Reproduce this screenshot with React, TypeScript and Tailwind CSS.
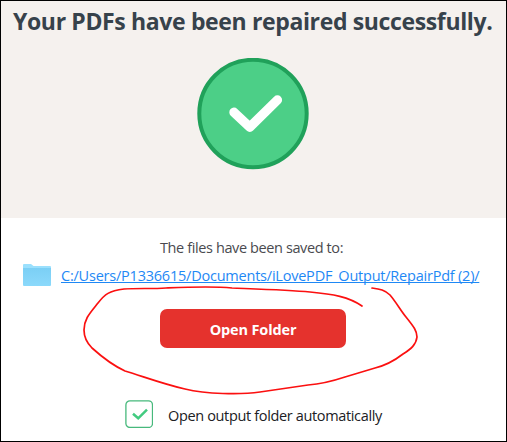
function SuccessIcon() {
  return (
    <svg className="mr-0.5 block h-28 w-28" viewBox="0 0 112 112" fill="none">
      <circle cx="56" cy="55.5" r="53.7" fill="#4ccf87" stroke="#20a15a" strokeWidth="4" />
      <path d="M37 54.3 L52.8 69.2 L80.4 42" stroke="#fff" strokeWidth="9.4" strokeLinecap="round" strokeLinejoin="round" />
    </svg>
  );
}

function FolderIcon() {
  return (
    <svg className="block h-6 w-7 shrink-0" viewBox="0 0 28 24">
      <defs>
        <linearGradient id="folder" x1="0" y1="0" x2="0" y2="1">
          <stop offset="0" stopColor="#7bcff5" />
          <stop offset="1" stopColor="#8bd9fb" />
        </linearGradient>
      </defs>
      <path d="M0 2Q0 1 1 1H8L10.5 3H27Q28 3 28 4V10H0Z" fill="#9be0fd" />
      <path d="M0 5H28V22Q28 23 27 23H1Q0 23 0 22Z" fill="url(#folder)" />
    </svg>
  );
}

function Checkbox() {
  return (
    <svg className="block h-7 w-7 shrink-0" viewBox="0 0 28 28" fill="none">
      <rect x="0.9" y="0.9" width="26.6" height="26.6" rx="4" stroke="#47b97c" strokeWidth="1.3" />
      <path d="M8 13.8L13.2 18.3L22 9.6" stroke="#42cb80" strokeWidth="2.5" />
    </svg>
  );
}

export default function App() {
  return (
    <main className="relative flex h-[442px] w-[507px] flex-col overflow-hidden border border-black bg-white font-['Open_Sans','Noto_Sans',sans-serif] text-[14.5px] tracking-[-0.39px] whitespace-nowrap">
      <section className="flex h-[217px] shrink-0 flex-col items-center bg-[#f5f1ee]">
        <h1 className="flex h-[57px] w-full items-start pl-3 text-[23px] leading-10 font-bold tracking-[-0.36px] text-[#37424b]">
          Your PDFs have been repaired successfully.
        </h1>
        <SuccessIcon />
      </section>
      <section className="flex flex-col">
        <p className="mt-[18px] h-6 pl-[159px] leading-6 text-[#4a4a4f]">The files have been saved to:</p>
        <div className="mt-[3px] flex h-6 items-center gap-2.5 pl-[22px]">
          <FolderIcon />
          <a className="mt-0.5 leading-6 tracking-[-0.22px] text-[#1e88f5] underline decoration-1 underline-offset-1 [text-decoration-skip-ink:none]">
            C:/Users/P1336615/Documents/iLovePDF_Output/RepairPdf (2)/
          </a>
        </div>
        <button className="mt-[22px] ml-[159px] h-[39px] w-[186px] rounded-[7px] bg-[#e5322d] pt-0.5 font-bold tracking-[-0.14px] text-white">
          Open Folder
        </button>
        <label className="mt-[52px] ml-[124px] flex h-7 items-center gap-[15px] text-[#202024]">
          <Checkbox />
          <span className="pt-1 tracking-[-0.35px]">Open output folder automatically</span>
        </label>
      </section>
      <svg className="pointer-events-none absolute -top-px -left-px h-[442px] w-[507px]" viewBox="0 0 507 442" fill="none">
        <path
          d="M372 288C380 289 385 290 390 295C396 302 401 311 406 317C414 327 417 331 417 337C416 345 411 349 403 354C394 361 387 365 375 368L345 377C330 382 321 384 308 385L260 392C240 395 206 394 185 389C163 384 142 376 125 371C112 365 102 357 92 348C85 341 84 335 84 330C84 319 90 313 98 303C105 294 109 291 124 289C137 288 152 289 166 288C190 287 212 286 232 288C257 289 289 290 310 292C333 294 349 297 362 306"
          stroke="#fb1010"
          strokeWidth="1.7"
          strokeLinecap="round"
        />
      </svg>
    </main>
  );
}
